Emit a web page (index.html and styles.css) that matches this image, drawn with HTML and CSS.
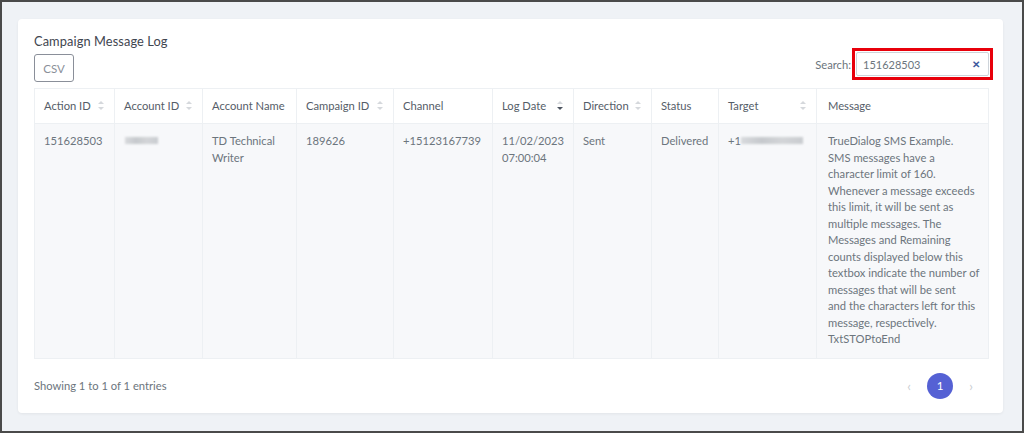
FILE: index.html
```html
<!DOCTYPE html>
<html>
<head>
<meta charset="utf-8">
<link rel="stylesheet" href="styles.css">
</head>
<body>
<div class="frame">
  <div class="card">
    <div class="top">
      <div class="left">
        <div class="title">Campaign Message Log</div>
        <button class="csv">CSV</button>
      </div>
      <div class="search">
        <span class="search-label">Search:</span>
        <div class="highlight">
          <div class="input">
            <span class="value">151628503</span>
            <span class="clear">✕</span>
          </div>
        </div>
      </div>
    </div>
    <table class="log">
      <colgroup>
        <col style="width:80px"><col style="width:88px"><col style="width:94px"><col style="width:97px"><col style="width:99px"><col style="width:81px"><col style="width:78px"><col style="width:67px"><col style="width:98px"><col style="width:172px">
      </colgroup>
      <thead>
        <tr>
          <th class="sortable">Action ID<span class="sort"></span></th>
          <th class="sortable">Account ID<span class="sort"></span></th>
          <th>Account Name</th>
          <th class="sortable">Campaign ID<span class="sort"></span></th>
          <th>Channel</th>
          <th class="sortable">Log Date<span class="sort desc"></span></th>
          <th class="sortable">Direction<span class="sort"></span></th>
          <th>Status</th>
          <th class="sortable">Target<span class="sort"></span></th>
          <th>Message</th>
        </tr>
      </thead>
      <tbody>
        <tr>
          <td>151628503</td>
          <td><span class="blur blur-id"></span></td>
          <td>TD Technical Writer</td>
          <td>189626</td>
          <td>+15123167739</td>
          <td>11/02/2023 07:00:04</td>
          <td>Sent</td>
          <td>Delivered</td>
          <td>+1<span class="blur blur-phone"></span></td>
          <td class="msg">TrueDialog SMS Example.<br>SMS messages have a<br>character limit of 160.<br>Whenever a message exceeds<br>this limit, it will be sent as<br>multiple messages. The<br>Messages and Remaining<br>counts displayed below this<br>textbox indicate the number of<br>messages that will be sent<br>and the characters left for this<br>message, respectively.<br>TxtSTOPtoEnd</td>
        </tr>
      </tbody>
    </table>
    <div class="footer">
      <span class="info">Showing 1 to 1 of 1 entries</span>
      <div class="pager">
        <span class="arrow">‹</span>
        <span class="page">1</span>
        <span class="arrow">›</span>
      </div>
    </div>
  </div>
</div>
</body>
</html>
```
FILE: styles.css
```css
* { box-sizing: border-box; }
html, body { margin: 0; padding: 0; }
body {
  font-family: Lato, "Noto Sans", sans-serif;
  color: #6c757d;
  font-size: 11.2px;
}
.frame {
  width: 1024px;
  height: 433px;
  border: 2px solid #4a4a4a;
  background: #eff2f6;
  padding: 17px 19px 18px 16px;
}
.card {
  background: #fff;
  border-radius: 4px;
  box-shadow: 0 1px 3px rgba(0,0,0,0.06);
  height: 394px;
  padding: 13px 15px 0 16px;
}
.top {
  display: flex;
  justify-content: space-between;
  align-items: flex-end;
}
.left { display: flex; flex-direction: column; align-items: flex-start; }
.title {
  font-size: 12.8px;
  line-height: 18px;
  color: #3f4650;
  font-weight: 400;
  letter-spacing: 0.1px;
}
.csv {
  margin-top: 4px;
  height: 28px;
  width: 40px;
  border: 1px solid #8a8f99;
  border-radius: 3px;
  background: #fff;
  color: #8a8f99;
  font-family: inherit;
  font-size: 11.5px;
  padding: 0;
}
.search {
  display: flex;
  align-items: center;
  margin-bottom: 2px;
  margin-right: -5px;
}
.search-label { color: #6c757d; margin-right: 1px; }
.highlight {
  border: 3px solid #e8000b;
  padding: 1px;
  width: 141px;
  height: 32px;
}
.input {
  border: 1px solid #ced4da;
  border-radius: 2px;
  height: 100%;
  display: flex;
  align-items: center;
  justify-content: space-between;
  padding: 0 8px 0 6px;
}
.value { color: #6c757d; font-size: 11px; }
.clear { color: #3d5a9e; font-size: 10px; font-weight: 700; }
.log {
  margin-top: 6px;
  width: 954px;
  border-collapse: collapse;
  table-layout: fixed;
}
.log th, .log td {
  border: 1px solid #edf0f3;
  text-align: left;
  vertical-align: top;
}
.log th {
  height: 35px;
  vertical-align: middle;
  font-weight: 400;
  color: #555d68;
  padding: 0 8px 2px 9px;
  position: relative;
  white-space: nowrap;
}
.log td {
  background: #f7f8fa;
  padding: 9px 8px 10px 9px;
  line-height: 16.5px;
  color: #6c757d;
}
.log td:last-child, .log th:last-child { padding-left: 11px; padding-right: 6px; }
.log td.msg { white-space: nowrap; }
.sort {
  position: absolute;
  right: 10px;
  top: 50%;
  width: 6px;
  height: 9px;
  margin-top: -5px;
}
.sort::before, .sort::after {
  content: "";
  position: absolute;
  left: 0;
  border-left: 3px solid transparent;
  border-right: 3px solid transparent;
}
.sort::before { top: 0; border-bottom: 3px solid #d5d8dc; }
.sort::after { bottom: 0; border-top: 3px solid #d5d8dc; }
.sort.desc::after { border-top-color: #4d5560; }
.blur {
  display: inline-block;
  height: 7px;
  vertical-align: 1px;
  background: linear-gradient(90deg, #d8dadd, #c6c9cd, #d3d5d8, #c9ccd0);
  filter: blur(1px);
}
.blur-id { width: 33px; margin-left: 1px; }
.blur-phone { width: 62px; }
.footer {
  display: flex;
  justify-content: space-between;
  align-items: center;
  height: 56px;
  padding-bottom: 2px;
}
.info { color: #6c757d; }
.pager { display: flex; align-items: center; margin-right: -1px; }
.arrow { color: #c8ccd1; font-size: 13px; width: 36px; text-align: center; }
.page {
  width: 26px;
  height: 26px;
  border-radius: 50%;
  background: #5561d4;
  color: #fff;
  display: flex;
  align-items: center;
  justify-content: center;
  font-size: 11.5px;
}
```
